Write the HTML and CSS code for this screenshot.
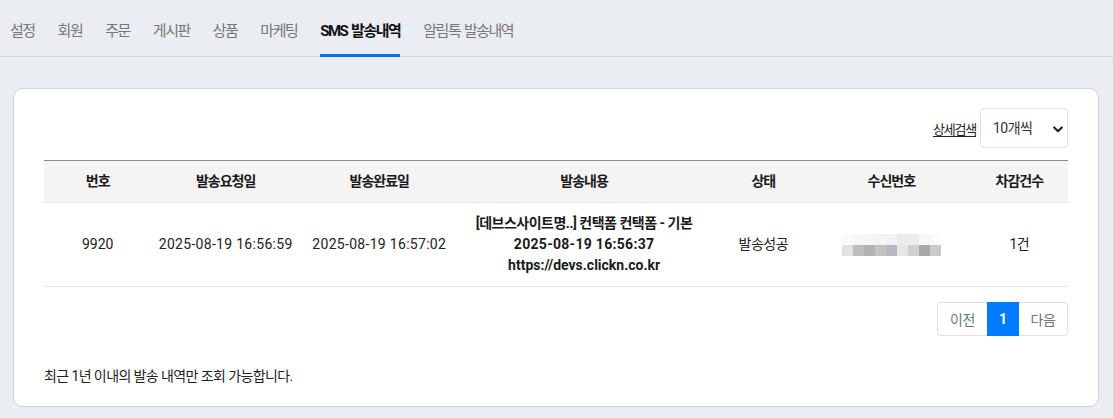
FILE: index.html
```html
<!DOCTYPE html>
<html lang="ko">
<head>
<meta charset="utf-8">
<title>SMS 발송내역</title>
<link rel="stylesheet" href="styles.css">
</head>
<body>
<nav class="tabs">
  <a class="tab">설정</a>
  <a class="tab">회원</a>
  <a class="tab">주문</a>
  <a class="tab">게시판</a>
  <a class="tab">상품</a>
  <a class="tab">마케팅</a>
  <a class="tab active">SMS 발송내역</a>
  <a class="tab">알림톡 발송내역</a>
</nav>

<main class="card">
  <div class="toolbar">
    <a class="detail-link">상세검색</a>
    <span class="select-wrap">
      <select class="per-page">
        <option>10개씩</option>
        <option>20개씩</option>
        <option>50개씩</option>
      </select>
      <svg class="chev" width="10" height="7" viewBox="0 0 10 7"><path d="M1.2 1.5 L5 5.2 L8.8 1.5" fill="none" stroke="#222" stroke-width="2.2" stroke-linecap="round" stroke-linejoin="round"/></svg>
    </span>
  </div>

  <table class="list">
    <colgroup>
      <col class="c10"><col class="c15"><col class="c15"><col class="c25"><col class="c10"><col class="c15"><col class="c10">
    </colgroup>
    <thead>
      <tr>
        <th>번호</th>
        <th>발송요청일</th>
        <th>발송완료일</th>
        <th>발송내용</th>
        <th>상태</th>
        <th>수신번호</th>
        <th>차감건수</th>
      </tr>
    </thead>
    <tbody>
      <tr>
        <td>9920</td>
        <td class="dt">2025-08-19 16:56:59</td>
        <td class="dt">2025-08-19 16:57:02</td>
        <td class="content">
          <span class="line ko">[데브스사이트명..] 컨택폼 컨택폼 - 기본</span>
          <span class="line dt">2025-08-19 16:56:37</span>
          <span class="line">https://devs.clickn.co.kr</span>
        </td>
        <td class="ko">발송성공</td>
        <td><span class="mosaic"><span class="m-top"></span><span class="m-bot"></span></span></td>
        <td class="ko">1건</td>
      </tr>
    </tbody>
  </table>

  <div class="pager">
    <a class="pg prev">이전</a>
    <a class="pg current">1</a>
    <a class="pg next">다음</a>
  </div>

  <p class="note">최근 1년 이내의 발송 내역만 조회 가능합니다.</p>
</main>
</body>
</html>
```

FILE: styles.css
```css
* { box-sizing: border-box; }

body {
  margin: 0;
  background: #eaedf1;
  font-family: Roboto, "Noto Sans CJK KR", sans-serif;
  font-size: 14px;
  color: #222;
}

.tabs {
  display: flex;
  align-items: flex-start;
  gap: 23px;
  height: 57px;
  padding-left: 10px;
  border-bottom: 1px solid #d3d8df;
}

.tab {
  display: block;
  padding: 21px 0 13px;
  line-height: 20px;
  font-size: 15px;
  letter-spacing: -1.5px;
  word-spacing: 1.5px;
  color: #777;
  border-bottom: 3px solid transparent;
  white-space: nowrap;
}

.tab.active {
  color: #111;
  font-weight: 700;
  border-bottom-color: #0a6cf5;
}

.card {
  margin: 31px 14px 0 13px;
  background: #fff;
  border: 1px solid #d0d5dc;
  border-radius: 10px;
  padding: 19px 30px 20px;
}

.toolbar {
  display: flex;
  justify-content: flex-end;
  align-items: center;
  gap: 4px;
  margin-bottom: 12px;
}

.detail-link {
  font-size: 13px;
  letter-spacing: -1.2px;
  color: #222;
  text-decoration: underline;
  text-underline-offset: 2px;
}

.select-wrap {
  position: relative;
  display: block;
  width: 88px;
  height: 40px;
}

.per-page {
  appearance: none;
  -webkit-appearance: none;
  width: 100%;
  height: 100%;
  border: 1px solid #dee2e6;
  border-radius: 4px;
  background: #fff;
  padding: 0 0 0 12px;
  font-family: Roboto, "Noto Sans CJK KR", sans-serif;
  font-size: 14px;
  letter-spacing: -0.5px;
  color: #333;
}

.chev {
  position: absolute;
  right: 5px;
  top: 18px;
  pointer-events: none;
}

.list {
  width: 100%;
  border-collapse: collapse;
  table-layout: fixed;
  border-top: 1px solid #8c8c8c;
}

.c10 { width: 10%; }
.c15 { width: 15%; }
.c25 { width: 25%; }

.list th {
  background: #f4f4f4;
  padding: 11px 0 11px 5px;
  line-height: 19px;
  font-weight: 700;
  letter-spacing: -1px;
  color: #1a1a1a;
  text-align: center;
  border-bottom: 1px solid #e6e6e6;
}

.list td {
  padding: 10px 0 10px 5px;
  line-height: 21px;
  text-align: center;
  color: #222;
  border-bottom: 1px solid #e8e8e8;
  white-space: nowrap;
}

.list td.content { font-weight: 700; color: #1a1a1a; }
.content .line { display: block; }
.ko { letter-spacing: -0.5px; }
.dt { letter-spacing: 0.3px; }

.mosaic {
  display: inline-flex;
  flex-direction: column;
  vertical-align: middle;
  width: 99px;
}

.m-top, .m-bot { display: block; height: 11px; }

.m-top {
  background: linear-gradient(to right,
    #fafafa 0 11px, #f5f6f6 11px 22px, #f5f5f5 22px 33px, #f4f4f4 33px 44px,
    #f2f2f2 44px 55px, #ebebeb 55px 66px, #ececec 66px 77px, #f7f7f7 77px 88px,
    #fbfbfb 88px 99px);
}

.m-bot {
  background: linear-gradient(to right,
    #e2e2e2 0 11px, #bcbebe 11px 22px, #b2b2b2 22px 33px, #c2c3bf 33px 44px,
    #b9b8c0 44px 55px, #e6e6e6 55px 66px, #d0d0d0 66px 77px, #a8a8ae 77px 88px,
    #cacaca 88px 99px);
}

.pager {
  display: flex;
  justify-content: flex-end;
  margin-top: 15px;
}

.pg {
  display: flex;
  align-items: center;
  justify-content: center;
  height: 34px;
  border: 1px solid #dee2e6;
  color: #6c757d;
  font-size: 14px;
  letter-spacing: -0.5px;
}

.pg.prev { width: 50px; border-radius: 4px 0 0 4px; border-right: 0; }
.pg.current { width: 32px; background: #007bff; border-color: #007bff; color: #fff; font-weight: 700; letter-spacing: 0; }
.pg.next { width: 49px; border-radius: 0 4px 4px 0; border-left: 0; }

.note {
  margin: 30px 0 0;
  line-height: 20px;
  font-size: 14px;
  letter-spacing: -0.6px;
  color: #222;
}
```
